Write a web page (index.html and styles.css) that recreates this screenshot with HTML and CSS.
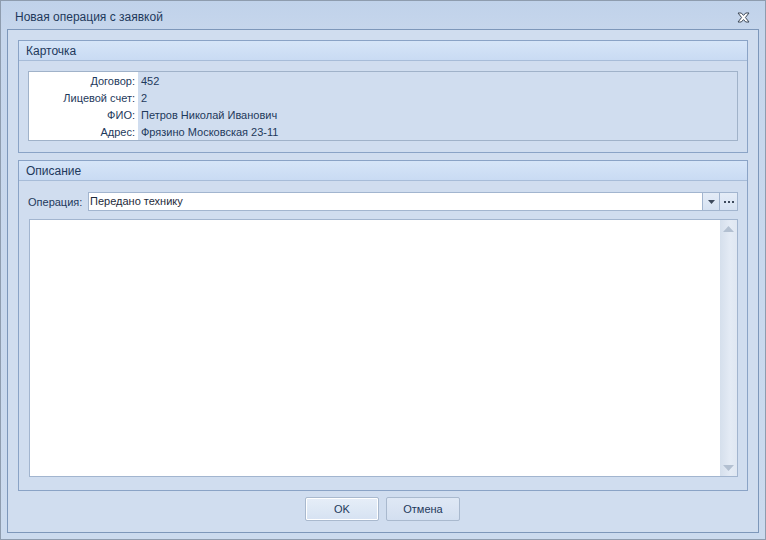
FILE: index.html
```html
<!DOCTYPE html>
<html lang="ru">
<head>
<meta charset="utf-8">
<title>Новая операция с заявкой</title>
<link rel="stylesheet" href="styles.css">
</head>
<body>
<div class="window">
  <div class="titlebar">
    <span class="title">Новая операция с заявкой</span>
    <span class="close">
      <svg width="13" height="11" viewBox="0 0 13 11">
        <path d="M1 1 H4.3 L6.5 3.4 L8.7 1 H12 L8.4 5.5 L12 10 H8.7 L6.5 7.6 L4.3 10 H1 L4.6 5.5 Z" fill="#fff" stroke="#3b4756" stroke-width="1" stroke-linejoin="round"/>
      </svg>
    </span>
  </div>
  <div class="frame">
    <section class="group card">
      <div class="group-head">Карточка</div>
      <div class="group-body">
        <div class="props">
          <div class="prop-label">Договор:</div><div class="prop-value">452</div>
          <div class="prop-label">Лицевой счет:</div><div class="prop-value">2</div>
          <div class="prop-label">ФИО:</div><div class="prop-value">Петров Николай Иванович</div>
          <div class="prop-label">Адрес:</div><div class="prop-value">Фрязино Московская 23-11</div>
        </div>
      </div>
    </section>
    <section class="group desc">
      <div class="group-head">Описание</div>
      <div class="group-body desc-body">
        <div class="op-row">
          <span class="op-label">Операция:</span>
          <div class="combo">
            <span class="combo-text">Передано технику</span>
            <span class="combo-btn drop"><svg width="7" height="4" viewBox="0 0 7 4"><path d="M0 0 H7 L3.5 4 Z" fill="#3d4a5c"/></svg></span>
            <span class="combo-btn dots"><i></i><i></i><i></i></span>
          </div>
        </div>
        <div class="memo">
          <div class="memo-area"></div>
          <div class="vscroll">
            <svg class="arr" width="11" height="6" viewBox="0 0 11 6"><path d="M0 6 H11 L5.5 0 Z" fill="#b3c0d1"/></svg>
            <svg class="arr" width="11" height="6" viewBox="0 0 11 6"><path d="M0 0 H11 L5.5 6 Z" fill="#b3c0d1"/></svg>
          </div>
        </div>
      </div>
    </section>
    <div class="buttons">
      <button class="btn default">OK</button>
      <button class="btn">Отмена</button>
    </div>
  </div>
</div>
</body>
</html>
```
FILE: styles.css
```css
* { box-sizing: border-box; }

html, body {
  margin: 0;
  padding: 0;
  width: 766px;
  height: 540px;
  overflow: hidden;
}

body {
  font-family: "Liberation Sans", sans-serif;
  font-size: 11px;
  color: #1e395b;
  background: #fff;
}

.window {
  width: 766px;
  height: 540px;
  border: 1px solid #8e9cae;
  background: linear-gradient(#c0d2ea, #c6d6ec 30px, #cbdaee);
  display: flex;
  flex-direction: column;
}

.titlebar {
  height: 28px;
  display: flex;
  align-items: center;
  justify-content: space-between;
  padding: 0 15px 0 14px;
}

.title {
  font-size: 12px;
  color: #1e395b;
  padding-top: 4px;
}

.close {
  display: flex;
  padding-top: 5px;
}

.frame {
  flex: 1;
  margin: 0 6px 6px 6px;
  border: 1px solid #7d97ba;
  background: #d0ddef;
  padding: 10px 10px 0 10px;
  display: flex;
  flex-direction: column;
}

.group {
  border: 1px solid #8aa3c6;
  background: #d0ddef;
}

.group-head {
  height: 20px;
  border-bottom: 1px solid #a7bcd8;
  background: linear-gradient(#d6e5f8, #c9dbf3);
  padding: 3px 0 0 7px;
  font-size: 12px;
  color: #1e395b;
}

.card .group-body {
  padding: 10px 9px 11px 9px;
}

.props {
  border: 1px solid #a0b2c9;
  display: grid;
  grid-template-columns: 109px 1fr;
  grid-auto-rows: 17px;
  background: #d0ddef;
  font-size: 11px;
}

.prop-label {
  background: #fff;
  text-align: right;
  padding: 1px 3px 0 0;
  line-height: 17px;
}

.prop-value {
  padding: 1px 0 0 3px;
  line-height: 17px;
}

.desc {
  margin-top: 7px;
  height: 331px;
  display: flex;
  flex-direction: column;
}

.desc-body {
  flex: 1;
  padding: 11px 9px 13px 9px;
  display: flex;
  flex-direction: column;
  font-size: 11px;
}

.op-row {
  display: flex;
  align-items: center;
  height: 19px;
}

.op-label {
  width: 60px;
}

.combo {
  flex: 1;
  height: 19px;
  border: 1px solid #a2b5cf;
  background: #fff;
  display: flex;
}

.combo-text {
  flex: 1;
  padding: 2px 0 0 1px;
  color: #1e2a3a;
}

.combo-btn {
  width: 17px;
  border-left: 1px solid #a2b5cf;
  background: linear-gradient(#e4ecf7, #d6e2f2);
  display: flex;
  align-items: center;
  justify-content: center;
}

.combo-btn.dots {
  width: 18px;
  gap: 2px;
}

.combo-btn.dots i {
  width: 2px;
  height: 2px;
  background: #3d4a5c;
}

.memo {
  flex: 1;
  margin: 8px 0 0 1px;
  border: 1px solid #a2b5cf;
  background: #fff;
  display: flex;
}

.memo-area { flex: 1; }

.vscroll {
  width: 17px;
  background: linear-gradient(90deg, #d5dfec, #e4ebf5 60%, #dfe7f2);
  display: flex;
  flex-direction: column;
  justify-content: space-between;
  align-items: center;
  padding: 6px 0 5px 0;
}

.buttons {
  display: flex;
  justify-content: center;
  gap: 7px;
  margin-top: 6px;
  padding-right: 1px;
}

.btn {
  width: 74px;
  height: 24px;
  border: 1px solid #a9b9ce;
  border-radius: 2px;
  background: linear-gradient(#dfe8f5, #d3dff0);
  font-family: "Liberation Sans", sans-serif;
  font-size: 11px;
  color: #1e395b;
  padding: 0;
}

.btn.default {
  box-shadow: inset 0 0 0 1px #fff;
  background: linear-gradient(#e6eef8, #d6e2f2);
}
```
